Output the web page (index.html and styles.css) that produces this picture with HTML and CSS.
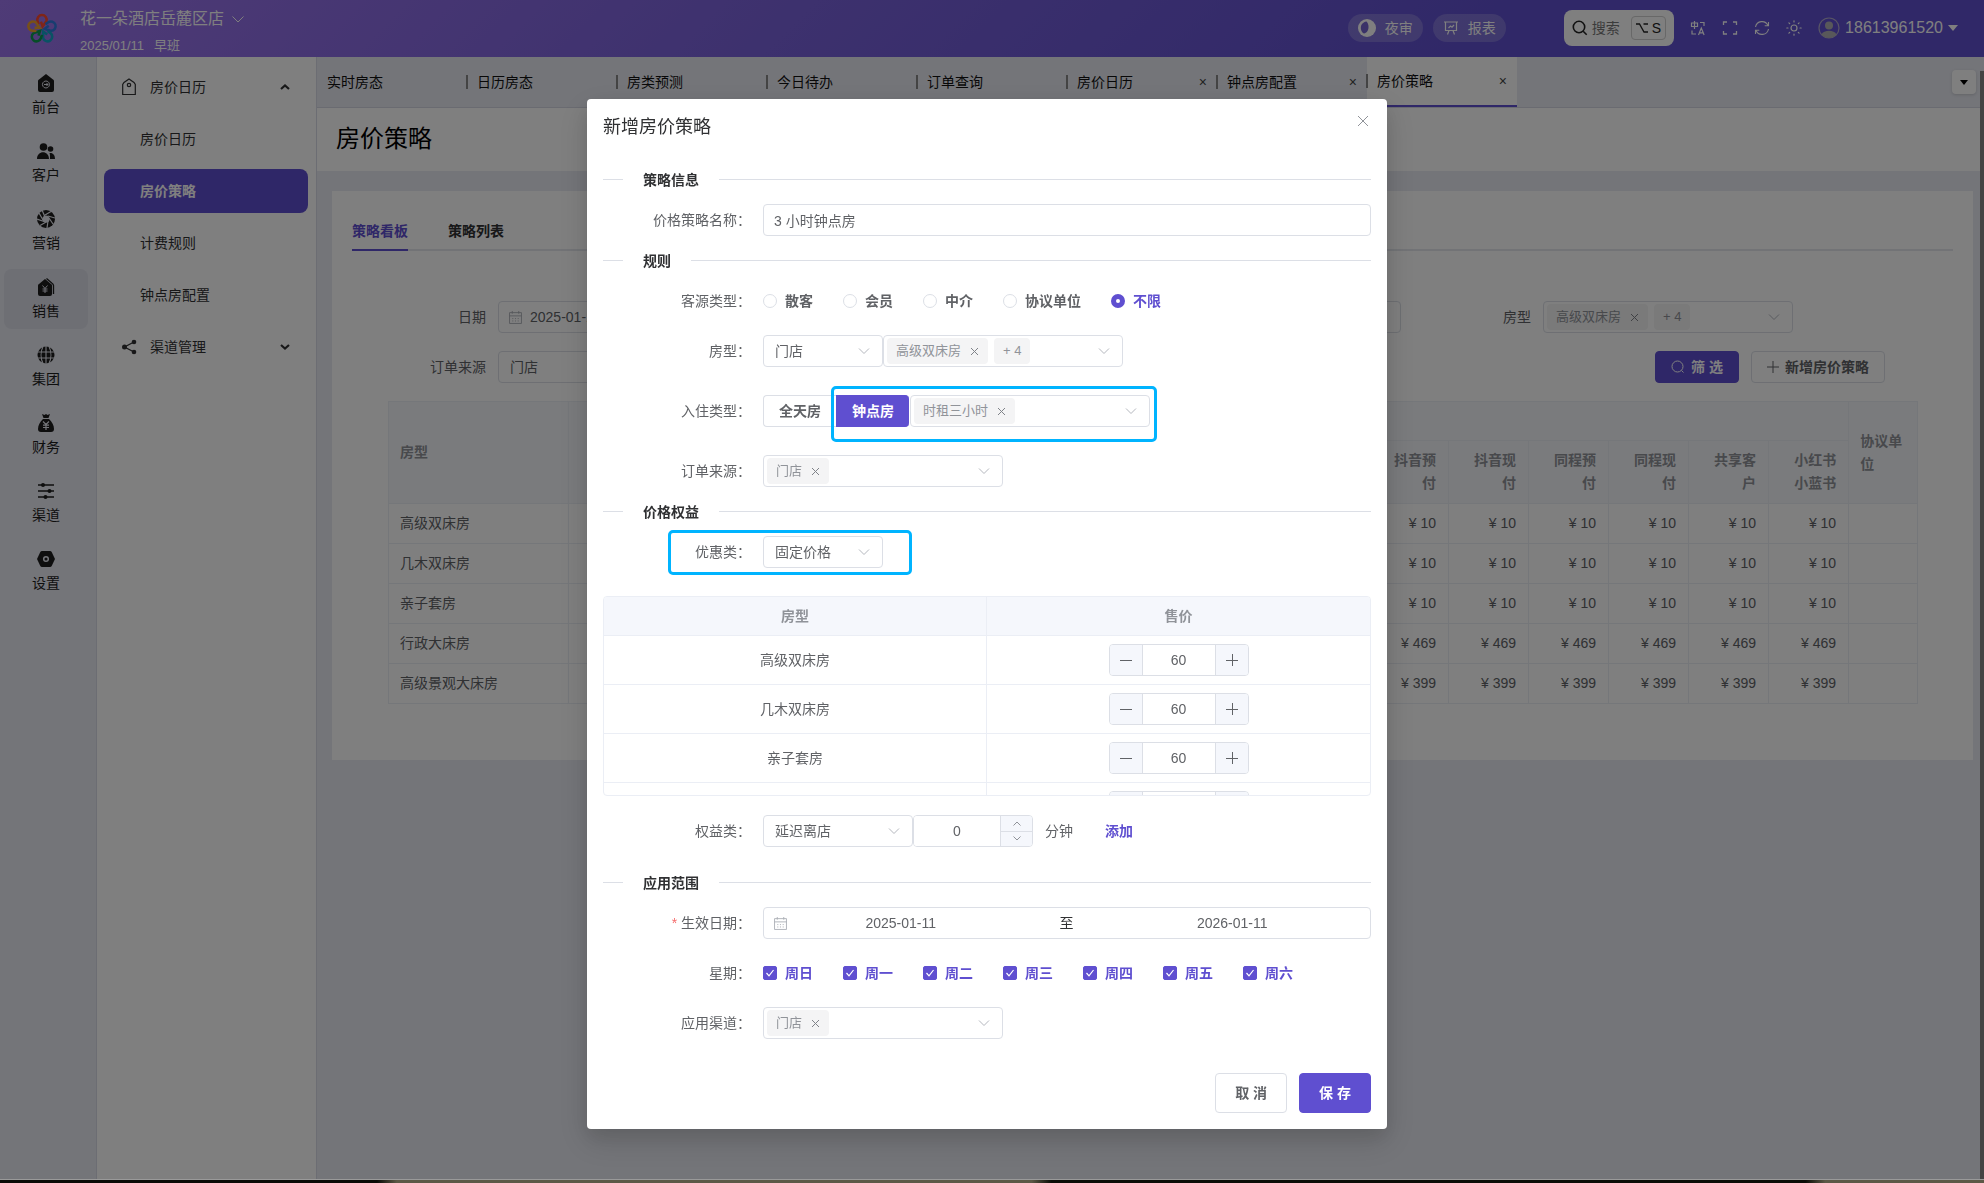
FILE: index.html
```html
<!DOCTYPE html>
<html lang="zh-CN">
<head>
  <meta charset="utf-8">
  <title>房价策略</title>
  <link rel="stylesheet" href="styles.css">
</head>
<body>
  <header class="topbar">
    <svg class="logo" viewBox="0 0 30 30" fill="none" stroke-width="2.4">
      <path stroke="#ff4a2e" d="M11.800 11.500 10.800 8.500a4.400 4.400 0 1 1 8.400 0L15.500 13.500 14 9"/>
      <path stroke="#2f7be0" transform="rotate(72 15 16)" d="M11.800 11.500 10.800 8.500a4.400 4.400 0 1 1 8.400 0L15.500 13.500 14 9"/>
      <path stroke="#12a5c8" transform="rotate(144 15 16)" d="M11.800 11.500 10.800 8.500a4.400 4.400 0 1 1 8.400 0L15.500 13.500 14 9"/>
      <path stroke="#0c9a50" transform="rotate(216 15 16)" d="M11.800 11.500 10.800 8.500a4.400 4.400 0 1 1 8.400 0L15.500 13.500 14 9"/>
      <path stroke="#f0a030" transform="rotate(288 15 16)" d="M11.800 11.500 10.800 8.500a4.400 4.400 0 1 1 8.400 0L15.500 13.500 14 9"/>
    </svg>
    <div class="store">
      <button class="store-name">花一朵酒店岳麓区店
        <svg width="14" height="14" viewBox="0 0 14 14" fill="none" stroke="currentColor"><path d="M1.500 4.500 7 10l5.500-5.500"/></svg>
      </button>
      <div class="shift"><span>2025/01/11</span><span>早班</span></div>
    </div>

    <div class="pills">
      <button class="pill">
        <svg width="18" height="18" viewBox="0 0 18 18"><circle cx="9" cy="9" r="9" fill="currentColor"/><path fill="#7565d0" d="M8.500 2.500c-4 .5-6.500 4-5.500 8 .5 2 1.500 3.500 3 4 2.500-.5 4.500-3 4.500-6.500 0-2.500-.8-4.500-2-5.500z"/></svg>
        夜审
      </button>
      <button class="pill">
        <svg width="16" height="16" viewBox="0 0 16 16" fill="none" stroke="currentColor" stroke-width="1.200"><path d="M1 2h14M2.500 2v8.500h11V2M5.500 8l2-2 1.500 1.200L11 5M6 10.500 4.500 14.500M10 10.500l1.500 4"/></svg>
        报表
      </button>
    </div>

    <button class="search">
      <svg width="16" height="16" viewBox="0 0 16 16" fill="none" stroke="#222" stroke-width="1.600"><circle cx="7" cy="7" r="5.700"/><path d="m11.200 11.200 3.500 3.500"/></svg>
      <span>搜索</span>
      <kbd><svg width="12" height="10" viewBox="0 0 12 10" fill="none" stroke="currentColor" stroke-width="1.300"><path d="M0 1h3.500l4.500 8h4M7.500 1H12"/></svg>S</kbd>
    </button>

    <nav class="tools">
      <button aria-label="语言"><svg viewBox="0 0 16 16" fill="none" stroke="currentColor" stroke-width="1.200"><path d="M1.500 3h6v3.500h-6zM4.500 1v8M10 2.500h4V6M2 10.500V14h4M8.500 15l2.800-7 2.800 7M9.500 12.800h3.600"/></svg></button>
      <button aria-label="全屏"><svg viewBox="0 0 16 16" fill="none" stroke="currentColor" stroke-width="1.300"><path d="M1.500 5V2H5M11 2h3.500v3M14.500 11v3H11M5 14H1.500v-3"/></svg></button>
      <button aria-label="刷新"><svg viewBox="0 0 16 16" fill="none" stroke="currentColor" stroke-width="1.100"><path d="M1.500 7A6.600 6.600 0 0 1 14 5.500M14.500 2v3.800h-3.800M14.500 9A6.600 6.600 0 0 1 2 10.500M1.500 14v-3.800h3.800"/></svg></button>
      <button aria-label="主题"><svg viewBox="0 0 16 16" fill="none" stroke="currentColor" stroke-width="1.200"><circle cx="8" cy="8" r="3"/><path stroke-linecap="round" d="M8 .8v1.200M8 14v1.200M.8 8H2M14 8h1.200M2.900 2.900l.8.8M12.300 12.300l.8.8M2.900 13.100l.8-.8M12.300 3.700l.8-.8"/></svg></button>
    </nav>
    <button class="user">
      <svg width="22" height="22" viewBox="0 0 22 22"><circle cx="11" cy="11" r="10" fill="none" stroke="#b0aacb" stroke-width="1.200"/><circle cx="11" cy="8.500" r="4" fill="#b0b0b4"/><path fill="#b0b0b4" d="M3.500 17.500c2-5 13-5 15 0a10 10 0 0 1-15 0z"/></svg>
      <span>18613961520</span>
      <svg width="10" height="6" viewBox="0 0 10 6"><path fill="currentColor" d="M0 0h10L5 6z"/></svg>
    </button>
  </header>

  <div class="layout">
    <nav class="rail">
      <a href="#"><svg viewBox="0 0 18 18"><path fill="currentColor" d="M9 0l7 5.500a2 2 0 0 1 1 1.500v9a2 2 0 0 1-2 2H3a2 2 0 0 1-2-2V7a2 2 0 0 1 1-1.500z"/><path fill="none" stroke="#e8eaf2" d="M9 7a3.500 3.500 0 1 1-.1 0zM7 10.500h4M9.500 9l1.500 1.500L9.500 12"/></svg>前台</a>
      <a href="#"><svg viewBox="0 0 18 18" fill="currentColor"><circle cx="6.500" cy="5" r="3.800"/><circle cx="13.500" cy="7" r="2.800"/><path d="M0 17c0-9 12-9 12 0zM13 17h5c0-4-2-6.500-5.500-6 .7 1.600.5 4 .5 6z"/></svg>客户</a>
      <a href="#"><svg viewBox="0 0 18 18"><circle cx="9" cy="9" r="9" fill="currentColor"/><g stroke="#e8eaf2" stroke-width="1.200"><path d="M5 0l3 7M14 1.500L8 5M18 8l-7-2M16 14l-4-6M10 18l1-7M3 15.500l7-4M0 9l7 2.500M2 3l4 7"/></g><circle cx="9" cy="9" r="3.600" fill="#e8eaf2"/></svg>营销</a>
      <a href="#" class="active"><svg viewBox="0 0 18 18"><path fill="currentColor" d="M8 1l6 5a2 2 0 0 1 1 1.500V16a2 2 0 0 1-2 2H3a2 2 0 0 1-2-2V7.500A2 2 0 0 1 2 6z"/><path fill="none" stroke="currentColor" stroke-width="1.300" d="M9.500.5l5.500 4.800a3 3 0 0 1 1.500 2V16"/><path fill="none" stroke="#dcdee8" d="M5.500 7.500 8 10.500l2.500-3M8 10.500V15M5.500 11h5M5.500 13h5"/></svg>销售</a>
      <a href="#"><svg viewBox="0 0 18 18"><circle cx="9" cy="9" r="8.500" fill="currentColor"/><path fill="none" stroke="#e8eaf2" stroke-width="1.100" d="M9 0v18M0 6h18M0 12h18M6 .5c-2.500 5-2.500 12 0 17M12 .5c2.500 5 2.500 12 0 17"/></svg>集团</a>
      <a href="#"><svg viewBox="0 0 18 18"><path fill="currentColor" d="M5 0l2.500 1L9 0l1.500 1L13 0l-1.500 4h-5zM6 5h6c3 3 5 6 5 10a3 3 0 0 1-3 3H4a3 3 0 0 1-3-3c0-4 2-7 5-10z"/><path fill="none" stroke="#e8eaf2" stroke-width="1.200" d="M6 7.500l3 3 3-3M9 10.500V16M6 11.200h6M6 13.500h6"/></svg>财务</a>
      <a href="#"><svg viewBox="0 0 18 18"><path stroke="currentColor" stroke-width="1.400" d="M1 3h16M1 9h16M1 15h16"/><g fill="currentColor"><circle cx="6" cy="3" r="2"/><circle cx="12.500" cy="9" r="2"/><circle cx="8.500" cy="15" r="2"/></g></svg>渠道</a>
      <a href="#"><svg viewBox="0 0 18 18"><path fill="currentColor" d="M5 1h8a2 2 0 0 1 1.700 1L18 9l-3.300 7a2 2 0 0 1-1.700 1H5a2 2 0 0 1-1.700-1L0 9l3.300-7A2 2 0 0 1 5 1z"/><circle cx="9" cy="9" r="2.300" fill="none" stroke="#e8eaf2" stroke-width="1.500"/></svg>设置</a>
    </nav>

    <nav class="menu">
      <a href="#" class="group">
        <svg class="menu-icon" viewBox="0 0 16 18" fill="none" stroke="currentColor" stroke-width="1.200"><path d="M8 1l5 3.500 1.300 2V16.500H1.700V6.500L3 4.500z"/><circle cx="8" cy="7" r="1.700"/></svg>
        <span>房价日历</span>
        <svg class="arrow" viewBox="0 0 10 6" fill="none" stroke="currentColor" stroke-width="2.200"><path d="M1 5l4-3.500L9 5"/></svg>
      </a>
      <a href="#" class="sub">房价日历</a>
      <a href="#" class="sub active">房价策略</a>
      <a href="#" class="sub">计费规则</a>
      <a href="#" class="sub">钟点房配置</a>
      <a href="#" class="group">
        <svg class="menu-icon" viewBox="0 0 16 18"><path fill="none" stroke="currentColor" stroke-width="1.300" d="M13 4L3.500 9l9.500 5"/><g fill="currentColor"><circle cx="13" cy="4" r="2.300"/><circle cx="3.500" cy="9" r="2.500"/><circle cx="13" cy="14" r="2.300"/></g></svg>
        <span>渠道管理</span>
        <svg class="arrow" viewBox="0 0 10 6" fill="none" stroke="currentColor" stroke-width="2.200"><path d="M1 1l4 3.500L9 1"/></svg>
      </a>
    </nav>

    <main class="main">
      <div class="page-tabs">
        <a href="#">实时房态</a>
        <a href="#">日历房态</a>
        <a href="#">房类预测</a>
        <a href="#">今日待办</a>
        <a href="#">订单查询</a>
        <a href="#" class="closable">房价日历</a>
        <a href="#" class="closable">钟点房配置</a>
        <a href="#" class="closable active">房价策略</a>
        <button class="more" aria-label="更多"><svg width="8" height="5" viewBox="0 0 8 5"><path d="M0 0h8L4 5z"/></svg></button>
      </div>
      <h1>房价策略</h1>

      <section class="card">
        <div class="card-tabs">
          <a href="#" class="active">策略看板</a>
          <a href="#">策略列表</a>
        </div>
        <div class="filters">
          <label for="f-date">日期</label>
          <div class="date-box">
            <svg class="cal" viewBox="0 0 12 12"><path d="M.5 1.500h11v10H.5zM.5 4.500h11M3 0v2.500M9 0v2.500M3 7h1M5.500 7h1M8 7h1M3 9.200h1M5.500 9.200h1M8 9.200h1"/></svg>
            <input id="f-date" value="2025-01-11">
          </div>
          <label for="f-room">房型</label>
          <div class="tag-select">
            <span class="tag">高级双床房<i></i></span><span class="tag">+ 4</span>
            <select id="f-room"><option></option></select>
          </div>
        </div>
        <div class="filters">
          <label for="f-source">订单来源</label>
          <select id="f-source" class="select w240"><option>门店</option></select>
          <div class="actions">
            <button class="btn primary"><svg width="14" height="14" viewBox="0 0 14 14" fill="none" stroke="currentColor"><circle cx="6.500" cy="6.500" r="5.500"/><path d="m10.500 10.500 2 2"/></svg>筛 选</button>
            <button class="btn"><svg width="12" height="12" viewBox="0 0 12 12" stroke="currentColor"><path d="M6 0v12M0 6h12"/></svg>新增房价策略</button>
          </div>
        </div>

        <table class="board">
          <colgroup><col class="c-room"><col span="16"><col class="c-last"></colgroup>
          <thead>
            <tr>
              <th rowspan="2" class="left">房型</th>
              <th rowspan="2"></th>
              <th colspan="15"></th>
              <th rowspan="2" class="left">协议单位</th>
            </tr>
            <tr>
              <th></th><th></th><th></th><th></th><th></th><th></th><th></th><th></th><th></th>
              <th>抖音预付</th><th>抖音现付</th><th>同程预付</th><th>同程现付</th><th>共享客户</th><th>小红书小蓝书</th>
            </tr>
          </thead>
          <tbody id="board-body"></tbody>
        </table>
      </section>
    </main>
  </div>
  <div class="scrollbar"></div>

  <div class="overlay">
    <form class="dialog" onsubmit="return false">
      <div class="dialog-head">
        <h2>新增房价策略</h2>
        <button type="button" class="close" aria-label="关闭"><svg width="12" height="12" viewBox="0 0 12 12" stroke="currentColor"><path d="M1 1l10 10M11 1L1 11"/></svg></button>
      </div>

      <div class="divider"><span>策略信息</span></div>
      <div class="row">
        <label for="name">价格策略名称：</label>
        <input id="name" class="text grow" value="3 小时钟点房">
      </div>

      <div class="divider"><span>规则</span></div>
      <div class="row">
        <span class="label">客源类型：</span>
        <div class="choices">
          <label><input type="radio" name="guest">散客</label>
          <label><input type="radio" name="guest">会员</label>
          <label><input type="radio" name="guest">中介</label>
          <label><input type="radio" name="guest">协议单位</label>
          <label><input type="radio" name="guest" checked>不限</label>
        </div>
      </div>
      <div class="row">
        <label for="room-scope">房型：</label>
        <select id="room-scope" class="select w120"><option>门店</option></select>
        <div class="tag-select">
          <span class="tag">高级双床房<i></i></span><span class="tag">+ 4</span>
          <select aria-label="房型"><option></option></select>
        </div>
      </div>
      <div class="row spaced">
        <span class="label">入住类型：</span>
        <div class="segment">
          <label><input type="radio" name="stay">全天房</label>
          <div class="marked">
            <label><input type="radio" name="stay" checked>钟点房</label>
            <div class="tag-select">
              <span class="tag">时租三小时<i></i></span>
              <select aria-label="时租"><option></option></select>
            </div>
          </div>
        </div>
      </div>
      <div class="row spaced">
        <label for="source">订单来源：</label>
        <div class="tag-select">
          <span class="tag">门店<i></i></span>
          <select id="source"><option></option></select>
        </div>
      </div>

      <div class="divider"><span>价格权益</span></div>
      <div class="row discount">
        <label for="discount">优惠类：</label>
        <select id="discount" class="select w120"><option>固定价格</option></select>
      </div>

      <div class="price-wrap">
        <table class="prices">
          <thead><tr><th>房型</th><th>售价</th></tr></thead>
          <tbody id="price-body"></tbody>
        </table>
      </div>

      <div class="row benefit">
        <label for="benefit">权益类：</label>
        <select id="benefit" class="select w150"><option>延迟离店</option></select>
        <div class="spinner">
          <input value="0" aria-label="分钟">
          <div class="steps">
            <button type="button" aria-label="加"><svg width="8" height="5" viewBox="0 0 8 5" fill="none" stroke="currentColor"><path d="M.5 4.500 4 1l3.500 3.500"/></svg></button>
            <button type="button" aria-label="减"><svg width="8" height="5" viewBox="0 0 8 5" fill="none" stroke="currentColor"><path d="M.5.5 4 4 7.500.5"/></svg></button>
          </div>
        </div>
        <span class="unit">分钟</span>
        <a href="#" class="add">添加</a>
      </div>

      <div class="divider"><span>应用范围</span></div>
      <div class="row">
        <label for="from" class="required">生效日期：</label>
        <div class="date-box grow range">
          <svg class="cal" viewBox="0 0 12 12"><path d="M.5 1.500h11v10H.5zM.5 4.500h11M3 0v2.500M9 0v2.500M3 7h1M5.500 7h1M8 7h1M3 9.200h1M5.500 9.200h1M8 9.200h1"/></svg>
          <input id="from" value="2025-01-11">
          <span>至</span>
          <input aria-label="结束日期" value="2026-01-11">
        </div>
      </div>
      <div class="row">
        <span class="label">星期：</span>
        <div class="choices">
          <label><input type="checkbox" checked>周日</label>
          <label><input type="checkbox" checked>周一</label>
          <label><input type="checkbox" checked>周二</label>
          <label><input type="checkbox" checked>周三</label>
          <label><input type="checkbox" checked>周四</label>
          <label><input type="checkbox" checked>周五</label>
          <label><input type="checkbox" checked>周六</label>
        </div>
      </div>
      <div class="row">
        <label for="channel">应用渠道：</label>
        <div class="tag-select">
          <span class="tag">门店<i></i></span>
          <select id="channel"><option></option></select>
        </div>
      </div>

      <div class="dialog-foot">
        <button type="button" class="btn large">取 消</button>
        <button class="btn large primary">保 存</button>
      </div>
    </form>
  </div>
  <div class="desktop-edge"></div>

  <script src="script.js"></script>
</body>
</html>
```
FILE: styles.css
```css
*,
*::before,
*::after {
  box-sizing: border-box;
}

body {
  margin: 0;
  min-height: 100vh;
  display: flex;
  flex-direction: column;
  overflow: hidden;
  background: #e8eaf2;
  color: #303133;
  font-family: "Liberation Sans", "Noto Sans CJK SC", sans-serif;
  font-size: 14px;
  line-height: 20px;
}

a {
  color: inherit;
  text-decoration: none;
}

button,
input,
select {
  font: inherit;
  color: inherit;
}

button {
  padding: 0;
  border: 0;
  background: none;
}

h1,
h2 {
  margin: 0;
  font-weight: 400;
}

svg {
  flex: none;
}

/* top bar */
.topbar {
  height: 57px;
  display: flex;
  align-items: center;
  padding: 0 26px 2px;
  background: linear-gradient(135deg, #9e76ee, #7a62dc 40%, #6050d0 75%);
  color: #fff;
}

.logo {
  width: 32px;
  height: 32px;
  margin-right: 22px;
}

.store {
  padding-top: 8px;
}

.store-name {
  display: flex;
  align-items: center;
  gap: 7px;
  font-size: 16px;
  line-height: 24px;
}

.shift {
  display: flex;
  gap: 10px;
  padding-top: 4px;
  font-size: 13px;
  line-height: 22px;
}

.pills {
  display: flex;
  gap: 10px;
  margin: 0 58px 0 auto;
}

.pill {
  display: flex;
  align-items: center;
  gap: 9px;
  height: 28px;
  padding: 0 10px;
  border-radius: 14px;
  background: rgba(255, 255, 255, .2);
}

.search {
  display: flex;
  align-items: center;
  height: 36px;
  margin-right: 16px;
  padding: 0 8px;
  border-radius: 8px;
  background: #fff;
  color: #777;
}

.search span {
  margin: 0 11px 0 4px;
}

kbd {
  display: flex;
  align-items: center;
  gap: 4px;
  height: 24px;
  padding: 0 4px;
  border: 1px solid #d0d0d0;
  border-radius: 4px;
  color: #222;
  font-family: inherit;
}

.tools {
  display: flex;
  gap: 16px;
}

.tools svg {
  display: block;
  width: 16px;
  height: 16px;
}

.user {
  display: flex;
  align-items: center;
  gap: 5px;
  margin-left: 16px;
  font-size: 16px;
}

/* navigation */
.layout {
  flex: 1;
  display: flex;
}

.rail {
  width: 97px;
  padding: 8px 8px 8px 4px;
  display: flex;
  flex-direction: column;
  gap: 8px;
  border-right: 1px solid #d8dae6;
}

.rail a {
  display: flex;
  flex-direction: column;
  align-items: center;
  gap: 5px;
  height: 60px;
  padding-top: 9px;
  border-radius: 8px;
  color: #1c1c1c;
}

.rail a.active {
  background: #dcdee8;
}

.rail svg {
  width: 18px;
  height: 18px;
}

.menu {
  width: 220px;
  padding: 8px 8px 8px 7px;
  display: flex;
  flex-direction: column;
  gap: 8px;
  background: #fff;
  border-right: 1px solid #d8dae6;
}

.menu a {
  display: flex;
  align-items: center;
  height: 44px;
  border-radius: 8px;
}

.menu .group {
  padding: 0 18px 0 17px;
}

.menu .group span {
  flex: 1;
  margin-left: 13px;
}

.menu .sub {
  padding-left: 36px;
}

.menu .active {
  background: #5f4fd0;
  color: #fff;
  font-weight: 700;
}

.menu-icon {
  width: 16px;
  height: 18px;
}

.arrow {
  width: 10px;
  height: 6px;
}

.main {
  flex: 1;
  min-width: 0;
}

.page-tabs {
  display: flex;
  align-items: center;
  height: 51px;
  padding-right: 8px;
  border-bottom: 1px solid #d4d6e2;
  color: #111;
}

.page-tabs a {
  position: relative;
  display: flex;
  align-items: center;
  width: 150px;
  height: 50px;
  padding: 0 10px;
}

.page-tabs a + a::before {
  content: "";
  position: absolute;
  left: -1px;
  width: 2px;
  height: 14px;
  background: #888;
}

.page-tabs .closable::after {
  content: "×";
  margin-left: auto;
  color: #444;
}

.page-tabs .active {
  background: #fff;
  border-bottom: 2px solid #5f4fd0;
}

.more {
  display: flex;
  align-items: center;
  justify-content: center;
  width: 24px;
  height: 24px;
  margin-left: auto;
  border-radius: 4px;
  background: #fff;
  box-shadow: 0 1px 3px rgba(0, 0, 0, .15);
}

h1 {
  height: 63px;
  padding: 0 19px;
  background: #fff;
  color: #000;
  font-size: 24px;
  line-height: 62px;
}

.card {
  margin: 20px 11px 0 15px;
  padding: 20px 20px 56px;
  background: #fff;
}

.card-tabs {
  display: flex;
  gap: 40px;
  border-bottom: 2px solid #e4e7ed;
  font-weight: 700;
}

.card-tabs a {
  height: 40px;
  margin-bottom: -2px;
  line-height: 40px;
}

.card-tabs .active {
  color: #5f4fd0;
  border-bottom: 2px solid #5f4fd0;
}

.filters {
  display: flex;
  align-items: center;
  margin: 50px 0 0 36px;
  color: #606266;
}

.filters + .filters {
  margin: 18px 68px 0 36px;
}

.filters > label {
  width: 98px;
  text-align: right;
  margin-right: 12px;
}

.filters .date-box {
  flex: 1;
  margin-right: 32px;
}

.filters .tag-select {
  margin-right: 160px;
}

.filters .actions {
  display: flex;
  gap: 12px;
  margin-left: auto;
}

.board {
  width: calc(100% - 72px);
  margin: 18px 36px 0;
  table-layout: fixed;
  border-collapse: collapse;
  color: #606266;
}

.board col {
  width: 80px;
}

.board .c-room {
  width: 180px;
}

.board .c-last {
  width: 69px;
}

.board th,
.board td {
  height: 40px;
  padding: 8px 12px;
  border: 1px solid #ebeef5;
  text-align: right;
  font-size: 14px;
  line-height: 23px;
}

.board th {
  height: 39px;
  background: #f5f7fa;
  color: #909399;
  font-weight: 700;
}

.board tr + tr th {
  height: 63px;
}

.board .left {
  padding: 0 11px;
  text-align: left;
}

.scrollbar {
  position: fixed;
  top: 71px;
  right: 0;
  bottom: 4px;
  width: 4px;
  background: #888;
}

/* controls */
.text,
.select,
.tag-select,
.date-box {
  height: 32px;
  border: 1px solid #dcdfe6;
  border-radius: 4px;
  background-color: #fff;
  color: #606266;
}

.text {
  padding: 0 10px;
}

.select,
.tag-select select {
  appearance: none;
  background-image: url("data:image/svg+xml,%3Csvg xmlns='http://www.w3.org/2000/svg' width='12' height='12' fill='none' stroke='%23b4b7be'%3E%3Cpath d='M1 3.500 6 8.500 11 3.500'/%3E%3C/svg%3E");
  background-repeat: no-repeat;
  background-position: right 12px center;
}

.select {
  padding: 0 11px;
}

.w120 { width: 120px; }
.w150 { width: 150px; }
.w240 { width: 240px; }

.tag-select {
  display: flex;
  align-items: center;
  gap: 6px;
  width: 240px;
  padding-left: 3px;
}

.filters .tag-select {
  width: 250px;
}

.tag-select select {
  flex: 1;
  min-width: 30px;
  height: 30px;
  border: 0;
  background-color: transparent;
}

.tag {
  display: flex;
  align-items: center;
  gap: 9px;
  height: 26px;
  padding: 0 9px;
  border-radius: 4px;
  background: #f4f4f5;
  color: #909399;
  font-size: 13px;
}

.tag i {
  width: 9px;
  height: 9px;
  background: url("data:image/svg+xml,%3Csvg xmlns='http://www.w3.org/2000/svg' width='9' height='9' stroke='%23808389'%3E%3Cpath d='M1 1l7 7M8 1L1 8'/%3E%3C/svg%3E");
}

.date-box {
  display: flex;
  align-items: center;
  padding: 0 10px;
}

.date-box input {
  flex: 1;
  min-width: 0;
  padding: 0 8px;
  border: 0;
  background: none;
}

.range {
  padding-right: 24px;
}

.range input {
  text-align: center;
}

.range span {
  width: 104px;
  color: #303133;
  text-align: center;
}

.cal {
  width: 13px;
  height: 13px;
  fill: none;
  stroke: #a8abb2;
  stroke-width: .8;
}

.btn {
  display: flex;
  align-items: center;
  justify-content: center;
  gap: 6px;
  height: 32px;
  padding: 0 15px;
  border: 1px solid #dcdfe6;
  border-radius: 4px;
  background: #fff;
  color: #606266;
  font-weight: 700;
}

.btn.primary {
  border-color: #5f4fd0;
  background: #5f4fd0;
  color: #fff;
}

.btn.large {
  height: 40px;
  padding: 0 19px;
}

/* dialog */
.overlay {
  position: fixed;
  inset: 0 0 3px;
  padding: 99px 10px 0 0;
  border-bottom: 1px solid #999;
  background: rgba(0, 0, 0, .5);
}

.dialog {
  width: 800px;
  margin: 0 auto;
  padding: 16px;
  border-radius: 4px;
  background: #fff;
  color: #606266;
  box-shadow: 0 12px 32px 4px rgba(0, 0, 0, .1), 0 8px 20px rgba(0, 0, 0, .1);
}

.dialog-head {
  display: flex;
  justify-content: space-between;
  height: 40px;
}

h2 {
  color: #303133;
  font-size: 18px;
  line-height: 24px;
}

.close {
  width: 16px;
  height: 12px;
  color: #909399;
  line-height: 12px;
}

.divider {
  display: flex;
  align-items: center;
  gap: 20px;
  height: 1px;
  margin: 24px 0;
  color: #303133;
  font-weight: 700;
}

.divider::before,
.divider::after {
  content: "";
  width: 20px;
  height: 1px;
  background: #dcdfe6;
}

.divider::after {
  flex: 1;
}

.row {
  display: flex;
  align-items: center;
  height: 32px;
}

.row + .row {
  margin-top: 18px;
}

.row + .spaced {
  margin-top: 28px;
}

.row > label,
.row > .label {
  width: 160px;
  padding-right: 12px;
  text-align: right;
}

.required::before {
  content: "* ";
  color: #f56c6c;
}

.grow {
  flex: 1;
}

.choices {
  display: flex;
  gap: 30px;
  font-weight: 700;
}

.choices label {
  display: flex;
  align-items: center;
  gap: 8px;
}

.choices input {
  appearance: none;
  width: 14px;
  height: 14px;
  margin: 0;
  border: 1px solid #dcdfe6;
  border-radius: 2px;
  background: #fff;
}

.choices [type=radio] {
  border-radius: 50%;
}

.choices [type=radio]:checked {
  border: 5px solid #5f4fd0;
}

.choices [type=checkbox]:checked {
  border-color: #5f4fd0;
  background: #5f4fd0 url("data:image/svg+xml,%3Csvg xmlns='http://www.w3.org/2000/svg' width='12' height='12' fill='none' stroke='white' stroke-width='1.200'%3E%3Cpath d='M2.500 6 5 8.800 9.500 3'/%3E%3C/svg%3E");
}

.choices label:has(:checked) {
  color: #5f4fd0;
}

.segment,
.marked {
  display: flex;
}

.segment label {
  height: 32px;
  padding: 0 15px;
  border: 1px solid #dcdfe6;
  border-right: 0;
  border-radius: 4px 0 0 4px;
  font-weight: 700;
  line-height: 30px;
}

.segment label:has(:checked) {
  border-color: #5f4fd0;
  border-radius: 0 4px 4px 0;
  background: #5f4fd0;
  color: #fff;
}

.segment label + .tag-select {
  margin-left: 1px;
}

.segment input {
  position: absolute;
  opacity: 0;
}

/* blue frames round the fields to notice */
.marked,
.discount {
  position: relative;
}

.marked::after,
.discount::after {
  content: "";
  position: absolute;
  inset: -9px -7px -15px -5px;
  border: 3px solid #00b4ff;
  border-radius: 5px;
  pointer-events: none;
}

.discount::after {
  inset: -6px auto -7px 65px;
  width: 244px;
}

.price-wrap {
  height: 200px;
  margin: 28px 0 19px;
  overflow-y: auto;
  scrollbar-width: none;
  border: 1px solid #ebeef5;
  border-radius: 4px;
}

.prices {
  width: 100%;
  table-layout: fixed;
  border-collapse: separate;
  border-spacing: 0;
  text-align: center;
}

.prices th,
.prices td {
  height: 49px;
  padding: 0;
  border-bottom: 1px solid #ebeef5;
}

.prices th {
  height: 39px;
  background: #f5f7fc;
  color: #909399;
  font-weight: 700;
}

.prices :is(th, td):first-child {
  border-right: 1px solid #ebeef5;
}

.stepper,
.spinner {
  display: flex;
  width: 140px;
  height: 32px;
  margin: 0 auto;
  overflow: hidden;
  border: 1px solid #dcdfe6;
  border-radius: 4px;
}

.stepper input,
.spinner input {
  flex: 1;
  min-width: 0;
  padding: 0;
  border: 0;
  text-align: center;
}

.stepper button {
  display: flex;
  align-items: center;
  justify-content: center;
  width: 32px;
  background: #f5f7fc;
}

.stepper input {
  border: solid #dcdfe6;
  border-width: 0 1px;
}

.benefit + .divider {
  margin-top: 35px;
}

.spinner {
  width: 120px;
  margin: 0;
}

.steps {
  display: flex;
  flex-direction: column;
  width: 32px;
  border-left: 1px solid #dcdfe6;
}

.steps button {
  flex: 1;
  display: flex;
  align-items: center;
  justify-content: center;
  background: #f5f7fc;
  color: #909399;
}

.steps button + button {
  border-top: 1px solid #dcdfe6;
}

.unit {
  margin: 0 32px 0 12px;
}

.add {
  color: #5f4fd0;
  font-weight: 700;
}

.dialog-foot {
  display: flex;
  justify-content: flex-end;
  gap: 12px;
  margin-top: 34px;
}

.desktop-edge {
  position: fixed;
  left: 0;
  right: 0;
  bottom: 0;
  height: 3px;
  background: linear-gradient(90deg, #0a0a06 19%, #5c5846 20%, #5c5846 52%, #0a0c06 53%, #0a0c06 91%, #5c5846 92%);
}
```
FILE: script.js
```js
const rooms = [
  ["高级双床房", 10],
  ["几木双床房", 10],
  ["亲子套房", 10],
  ["行政大床房", 469],
  ["高级景观大床房", 399]
];

const boardBody = document.getElementById("board-body");
const priceBody = document.getElementById("price-body");

rooms.forEach(function (room, index) {
  // channel columns on the left have no price, the last six do
  const prices = "<td></td>".repeat(10) + ("<td>¥ " + room[1] + "</td>").repeat(6);
  boardBody.innerHTML += "<tr><td class=\"left\">" + room[0] + "</td>" + prices + "<td></td></tr>";

  if (index > 3) return;
  priceBody.innerHTML += `
    <tr>
      <td>${room[0]}</td>
      <td>
        <div class="stepper">
          <button type="button" aria-label="减"><svg width="12" height="12" stroke="currentColor"><path d="M0 6.500h12"/></svg></button>
          <input value="60" aria-label="${room[0]}售价">
          <button type="button" aria-label="加"><svg width="12" height="12" stroke="currentColor"><path d="M0 6.500h12M6.500 0v12"/></svg></button>
        </div>
      </td>
    </tr>`;
});
```
